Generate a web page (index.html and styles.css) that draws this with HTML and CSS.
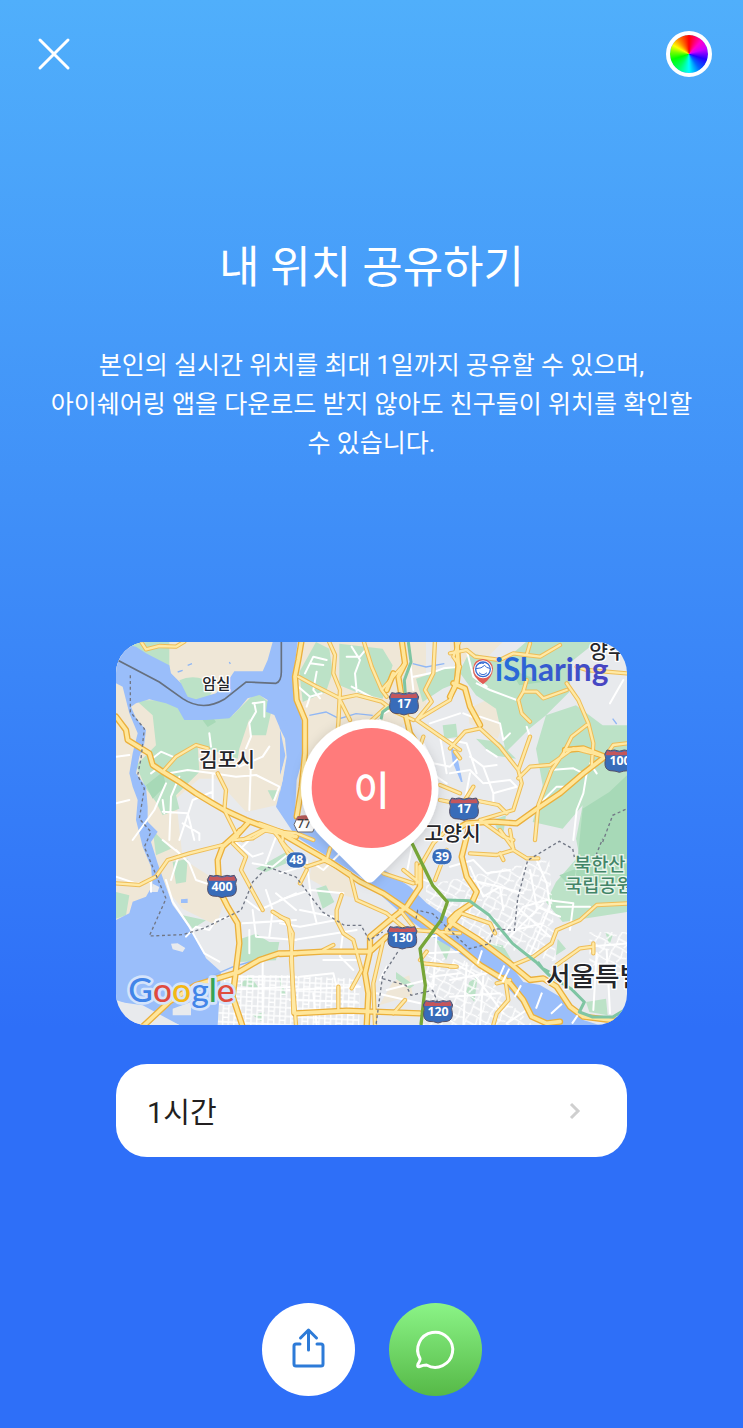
FILE: index.html
```html
<!DOCTYPE html>
<html lang="ko">
<head>
<meta charset="utf-8">
<meta name="viewport" content="width=device-width, initial-scale=1">
<title>내 위치 공유하기</title>
<link rel="stylesheet" href="styles.css">
</head>
<body>
<div class="screen">
  <header class="topbar">
    <button class="icon-button" type="button" aria-label="닫기">
      <svg class="close-icon" viewBox="0 0 46 46" aria-hidden="true"><path d="M9 9 37 37M37 9 9 37"/></svg>
    </button>
    <button class="color-wheel" type="button" aria-label="색상"></button>
  </header>
  <main class="content">
    <h1 class="title">내 위치 공유하기</h1>
    <p class="description">본인의 실시간 위치를 최대 1일까지 공유할 수 있으며,<br>아이쉐어링 앱을 다운로드 받지 않아도 친구들이 위치를 확인할 수&nbsp;있습니다.</p>
    <div class="cards">
      <svg class="map" viewBox="0 0 1533 1149" role="img" aria-label="지도">
        <defs>
          <pattern id="blocks" width="34" height="26" patternUnits="userSpaceOnUse" patternTransform="rotate(3)">
            <path d="M0 3H34M5 0V26M22 3V26M5 15H22" class="block-line"/>
          </pattern>
          <pattern id="alleys" width="58" height="48" patternUnits="userSpaceOnUse" patternTransform="rotate(28)">
            <path d="M0 8 28 4 58 8M12 0 8 24 12 48M36 5 42 30 36 48M8 30 42 30 58 24" class="block-line"/>
          </pattern>
          <linearGradient id="brand" x1="0" x2="1"><stop offset="0" stop-color="#2470dc"/><stop offset="1" stop-color="#4a43c0"/></linearGradient>
          <filter id="pin-shadow" x="-20%" y="-20%" width="140%" height="140%"><feDropShadow dx="0" dy="4" stdDeviation="16" flood-opacity=".15"/></filter>
          <g id="shield">
            <path d="M-37-32Q-26-28-15-32Q0-25 15-32Q26-28 37-32L44-19Q38-8 43 4Q45 26 28 30Q12 30 0 35Q-12 30-28 30Q-45 26-43 4Q-38-8-44-19Z" fill="#386cb9" stroke="#555069" stroke-width="3"/>
            <path d="M-36-30Q-26-25-15-29Q0-22 15-29Q26-25 36-30L41-19 39-16H-39L-41-19Z" fill="#c4565c"/>
          </g>

          <g id="minor-roads">
            <g transform="translate(0 -6)">
              <path d="M410 190 445 185 445 230M415 190 420 215 400 250 405 290 390 325M280 280 285 320M105 400 125 385 160 400 215 390 290 400 360 410 420 405 490 440 475 480M290 400 290 480M405 360 400 510M160 600 165 470 190 410M50 600 115 510 150 430M190 600 230 480 290 455M0 490 40 480M0 350 40 345M110 355 135 335 170 350M370 380 440 350 460 320M200 550 250 580 250 600M140 515 215 520 235 600M140 480 145 520"/>
            </g>
            <g transform="translate(492 -6)">
              <path d="M75 100 100 50 140 60M90 70 130 75M55 140 90 170 80 200M90 170 125 160M110 95 100 150 120 175M215 20 240 60 225 100 230 155M240 50 260 25M200 50 240 50M215 140 290 180M290 260 310 220 330 210M450 100 490 85 540 80M400 110 450 100M430 310 460 370 510 380 540 350M440 330 440 390 500 430M480 290 500 400M390 60 400 150M450 250 540 220"/>
            </g>
            <g transform="translate(1002 -6)">
              <path d="M80 130 120 150 200 180M50 30 70 110 110 140M90 230 150 250 160 300M110 330 140 350M160 300 180 280M60 350 100 380 140 375M0 400 60 390 100 430 180 420 200 440 130 460 130 490M60 400 45 480M100 380 130 460M230 260 240 290M300 390 370 385 400 400M410 400 400 460 380 510 370 600M40 220 90 240M480 190 520 120M0 300 50 310 80 400M270 490 320 440 350 440M420 370 440 400"/>
            </g>
            <g transform="translate(0 564)">
              <path d="M0 140 60 160 105 155 105 185M150 150 170 215 220 290 265 370 310 395M180 60 220 100 240 150 300 170M140 30 190 70 165 150M210 320 240 290 280 300 300 270 340 260M390 210 430 240 540 190M410 240 420 320 540 330M450 180 470 240 460 320M380 280 540 270M480 190 540 240M400 300 400 370M440 380 440 585M310 440 540 440M310 480 540 470M350 30 410 80 440 70M370 60 410 20M410 100 470 110 520 70M480 20 450 100"/>
            </g>
            <g transform="translate(492 564)">
              <path d="M0 130 100 100 130 120 190 60M60 240 160 260M80 90 95 220 110 280M0 280 60 290 170 270M40 330 230 300M60 440 160 430 170 470M0 210 90 180 190 190M190 300 180 380 220 420M130 390 240 390M20 480 240 470M30 510 230 515M100 490 110 585M400 30 380 130 460 160M440 320 540 310M430 370 540 365M450 440 540 430M300 450 320 410M320 480 440 450 460 480M470 300 460 470M290 490 420 520"/>
            </g>
            <g transform="translate(1002 564)">
              <path d="M0 110 70 90 110 130 180 120M60 110 100 200 150 170 220 190M60 150 150 170 160 240M170 300 220 230 290 210 370 220 360 300M260 90 290 160 300 230 240 370M200 230 300 320M240 120 260 230 330 260M180 320 280 220M150 310 280 280M320 230 420 230M10 400 70 430 160 550M0 450 110 430M0 500 150 490M50 400 40 585M100 440 90 585M410 350 540 340M440 370 430 540M470 360 480 550M400 430 520 430M170 580 230 540"/>
            </g>
          </g>

          <g id="roads">
            <g transform="translate(0 -6)">
              <path d="M75 5 90 28 130 18 180 20 205 5M140 395 180 350 240 315 275 325M305 400 330 450 325 510M325 510 365 590M340 605 400 545M430 550 500 575 500 600M380 600 440 570 540 590"/>
            </g>
            <g transform="translate(492 -6)">
              <path d="M145 0 165 45 160 100 180 150 175 250M55 110 110 140 180 175 230 165 305 185 345 215 400 240M250 0 275 80 305 150 375 70M305 150 320 170M180 180 210 240M175 250 170 300M265 250 320 200M465 0 460 100 435 150 455 185 410 240M540 80 510 180 410 240 540 330M430 290 420 320M480 435 540 460M480 480 530 490M540 0 520 50 540 80M0 575 50 580 100 600"/>
            </g>
            <g transform="translate(1002 -6)">
              <path d="M240 10 230 45 190 40 150 60 75 50 50 30 0 40M230 45 270 50 330 15M230 120 220 155 205 180 215 220 240 245M220 155 260 155 280 175 350 150M350 130 385 180 415 250 430 310 425 380M410 255 365 290 340 340 305 390 265 495 255 600M205 390 240 290M0 325 45 275 90 265M15 335 30 355M90 265 150 320 205 390 215 430 190 510 90 540M205 415 240 380 300 375 370 325 465 350M90 540 160 590 190 600M70 480 145 495 170 520M45 480 70 440M380 80 410 90 530 100M465 350 490 315 530 310"/>
            </g>
            <g transform="translate(0 564)">
              <path d="M370 0 355 30 410 25 450 0M350 40 390 80 375 120 440 240M470 245 510 270 530 310 525 390 540 585M470 0 510 50 530 70M0 160 70 165 120 140 155 90 220 70 320 45"/>
            </g>
            <g transform="translate(492 564)">
              <path d="M0 30 30 80 80 110 140 90 150 55M60 160 80 120M170 270 170 240 185 195M0 260 25 270 35 360 40 550M130 90 210 130 230 210 320 250 380 300M170 270 190 310 220 330 245 420 215 475M175 470 175 540M130 360 160 345M310 330 280 460 285 585M340 550 375 510M430 400 525 410M440 365 420 390M370 120 420 160M420 110 460 40 500 0M410 160 410 100M310 130 400 160M360 240 400 290M400 300 540 310M465 150 500 60"/>
            </g>
            <g transform="translate(1002 564)">
              <path d="M60 70 140 75 190 60 180 0M190 60 230 85 265 85M150 0 190 55M160 90 150 70M35 250 120 280 135 310M190 405 250 380 305 340 320 300 390 270 440 225 540 220M320 405 390 355 430 350M165 440 175 510 140 550 130 585M0 410 20 410M140 460 180 450M430 340 430 370"/>
            </g>
          </g>
          <g id="highways">
            <g transform="translate(0 -6)">
              <path d="M0 230 30 270 35 300 100 340 110 375 140 395 190 425 240 460 290 490 325 510 390 540 470 570 540 590M350 600 395 550"/>
            </g>
            <g transform="translate(492 -6)">
              <path d="M65 0 55 60 45 110 50 180 75 240 75 340 65 440 50 530M365 0 375 70 355 110 365 170 390 280 430 340M340 100 320 150"/>
            </g>
            <g transform="translate(1002 -6)">
              <path d="M20 0 25 80 20 130 0 170M0 580 50 550 130 545 200 550 270 500 330 460 400 400 465 350M10 130 45 145 60 200 90 255M345 330 400 325 465 350"/>
            </g>
            <g transform="translate(0 564)">
              <path d="M375 0 320 50 305 90 310 180 335 230 365 280 370 340 360 420 350 500 380 590M80 590 160 515 240 465 370 425 430 390 490 370 540 370"/>
            </g>
            <g transform="translate(492 564)">
              <path d="M0 8 80 55 150 95 240 155 310 190 420 265 540 355M0 372 130 365 270 365 320 320 400 300M270 365 270 320 330 270 380 230 420 170 420 110M270 365 255 430 265 490 260 590M45 550 200 542 420 550M540 250 500 300"/>
            </g>
            <g transform="translate(1002 564)">
              <path d="M55 0 35 80 50 140 80 185 65 220 20 250 0 270M0 275 80 325 180 400 240 450 280 445 320 470 360 530 400 560 520 575M30 355 90 405 180 460 220 510 245 560 290 580 330 575"/>
            </g>
          </g>
        </defs>

        <rect width="1533" height="1149" fill="#e8eaed"/>
        <g class="countryside">
          <path d="M0 0H930V190L860 250 700 490 550 480 480 490 390 510 300 410 250 410 180 470 200 650 340 740 300 850 200 800 150 740 0 900ZM1002 0H1160L1090 70 1002 50ZM1056 200 1110 175 1172 215 1145 290 1110 270 1060 245ZM590 650 700 690 720 770 650 750 580 710ZM830 1020 880 1000 890 1060 790 1090Z"/>
        </g>
        <g class="green">
          <path d="M20 0H160V100L100 50ZM190 115Q240 90 300 130L270 180 215 175ZM60 175 150 175 240 230 350 220 420 150 470 190 450 280 405 280 400 230 370 320 365 350 245 310 250 390 180 460 190 500 140 520 120 480 90 440 60 370 120 310 110 220Z"/>
          <path d="M0 750 40 760 30 820 0 830ZM10 855 60 840 75 875 50 900ZM110 565 165 620 120 640ZM170 660 215 650 210 720 180 725ZM200 820 270 835 230 860ZM375 890 420 875 460 900 490 900 480 955 370 960ZM400 1000 430 1040 370 1030ZM490 1000 510 1060 495 1060ZM455 445 490 445 470 475ZM410 1120 445 1110 440 1140Z"/>
          <path d="M600 0 640 20 650 90 630 150 560 180 550 90ZM670 5 800 20 830 70 800 170 720 150 670 130ZM900 110 1020 70 1030 120 980 140 920 180ZM980 250 1020 245 1025 285 985 290Z"/>
          <path d="M1060 30 1160 60 1230 0H1440L1365 60 1360 150 1290 220 1240 260 1170 330 1140 200 1080 160 1030 90ZM1290 220 1380 190 1460 250 1533 250V810L1340 840 1290 780 1320 720 1390 640 1380 590 1400 490 1340 560 1250 540 1280 430 1260 320ZM1080 290 1150 300 1200 350 1130 340ZM1130 535 1170 520 1160 590Z"/>
          <path d="M600 740 630 730 655 780 620 800ZM840 990 895 1030 880 1040 840 1010ZM1060 1020 1085 1005 1075 1080 1050 1050ZM1100 900 1160 910 1190 960 1140 950ZM1325 890 1350 920 1320 940ZM1468 870 1490 880 1480 910ZM1410 1080 1470 1070 1475 1120 1420 1110ZM960 895 1010 900 990 955ZM420 680 510 630 520 660 450 690Z"/>
        </g>
        <g class="deep-green">
          <path d="M1400 500 1480 450 1533 400V720L1440 720 1380 700ZM1180 80 1280 120 1210 130ZM260 235 290 225 300 240 275 255ZM90 430 140 390 150 430 110 470ZM1330 700 1380 680 1370 740Z"/>
        </g>
        <path d="M305 1000H540V1149H305ZM492 1000 730 1010 730 1149H492Z" fill="url(#blocks)"/>
        <path d="M930 730 1300 650 1320 960 1100 900 930 780ZM930 940 1080 960 1190 1090 1250 1149H920ZM1420 870H1533V980L1420 970Z" fill="url(#alleys)"/>
        <g class="water">
          <path d="M0 0 60 14 90 34 160 70 165 94 195 124 215 164 240 172 300 154 340 110 355 88 440 88 455 54 470 0H545L532 104 537 174 557 224 562 344 542 414 537 514 555 545 640 575 772 698 802 682 882 734 932 784 1010 838 1082 889 1172 954 1222 1020 1272 1029 1332 1064 1402 1134 1450 1149H1330L1262 1124 1217 1084 1172 1034 1092 977 1002 915 942 880 862 820 732 704 540 584 480 494 500 414 510 324 490 254 475 219 450 209 455 174 430 159 395 169 370 199 340 229 270 234 205 234 185 199 150 184 100 172 60 184 45 194 60 229 90 264 85 304 70 344 60 394 90 434 95 494 95 539 125 569 105 600 125 664 150 734 170 789 240 884 270 949 315 989 305 1149H190L60 1094 0 1074V834L40 814 50 779 90 764 110 729 105 674 80 614 75 594 60 534 65 474 50 434 40 394 50 334 65 274 40 214 20 134 0 124Z"/>
          <path d="M195 772 215 770 215 783 195 783ZM500 222 515 250 508 250ZM1002 300 1025 350 1040 420 1035 420 1010 360ZM492 264 510 300 508 350 492 400Z"/>
        </g>
        <path d="M492 260 507 290 512 345 500 415 492 450 485 435 508 340Z" class="island"/>
        <path d="M165 905 185 904 208 918 200 930 170 922ZM10 1080 80 1090 190 1149H40ZM170 1100 225 1080V1120H170ZM110 725 130 735 125 750 105 750Z" class="sandbar"/>
        <g class="streams"><path d="M580 220 630 210 670 230 720 215 770 220M890 65 930 75 985 65M185 90 200 85M215 70 228 65M340 60 343 66M1490 230 1502 246M270 1010 350 975 450 945 490 935M890 840 870 820"/></g>
        <use href="#minor-roads" class="minor"/>
        <use href="#roads" class="road-case"/>
        <use href="#highways" class="highway-case"/>
        <use href="#roads" class="road-fill"/>
        <use href="#highways" class="highway-fill"/>
        <path d="M1085 965 1098 925M1148 1010 1165 970M1160 1020 1180 980M1196 1065 1215 1030M1260 1100 1278 1052M1305 1115 1338 1085M1368 1145 1385 1120" class="bridge"/>
        <g class="rail-green">
          <path d="M877 0 885 60 865 115 868 155M795 232 800 210 820 195 850 188M992 774 1060 776 1120 820 1190 905 1260 960 1300 1000 1365 1040 1405 1080 1390 1110 1430 1125 1490 1125 1533 1100M1265 960 1280 980 1300 990"/>
        </g>
        <path d="M888 604 950 730 994 780 975 835 912 920 928 1030 915 1149" class="rail-olive"/>
        <path d="M0 52 130 120 200 170Q260 210 325 172L390 120 480 124Q496 118 496 90V0" class="boundary-rail"/>
        <g class="border">
          <path d="M43 100 43 210 85 260 75 350 65 400 85 440 70 530 105 570 85 615 150 770 100 882 200 878 260 860 375 805 410 720 455 675 540 705 620 810 685 850 735 850 760 895 800 870M900 830 905 805 950 815 1060 920 1120 905 1135 860 1195 865 1205 770 1235 655 1330 598 1370 620 1375 645M1440 640 1460 590M1460 600 1490 520 1533 500M845 930 800 1000 780 1149M800 1010 870 1030 885 1060 950 1045 965 1080"/>
        </g>

        <use href="#shield" x="864" y="184"/><use href="#shield" x="1044" y="500"/>
        <use href="#shield" x="1510" y="356"/><use href="#shield" x="318" y="732"/>
        <use href="#shield" x="859" y="886"/><use href="#shield" x="966" y="1108"/>
        <path d="M545 524H590L602 545 590 570H545L534 548Z" fill="#fff" stroke="#6c6970" stroke-width="3"/>
        <path d="M545 524Q565 516 590 524L596 535H540Z" fill="#b55c5a"/>
        <rect x="511" y="630" width="60" height="48" rx="22" class="route"/>
        <rect x="948" y="620" width="60" height="48" rx="22" class="route"/>
        <g class="route-text">
          <text x="864" y="198">17</text><text x="1044" y="514">17</text><text x="1512" y="370">100</text>
          <text x="318" y="746">400</text><text x="859" y="900">130</text><text x="966" y="1122">120</text>
          <text x="541" y="667">48</text><text x="978" y="657">39</text><text x="564" y="559" class="route-dark">77</text>
        </g>
        <g class="place">
          <text x="301" y="141" font-size="46">암실</text>
          <text x="333" y="376" font-size="61">김포시</text>
          <text x="1010" y="596" font-size="61">고양시</text>
          <text x="1420" y="51" font-size="61" text-anchor="start">양주시</text>
          <text x="1290" y="1033" font-size="80" text-anchor="start">서울특별시</text>
        </g>
        <g class="park"><text x="1374" y="687">북한산</text><text x="1347" y="749">국립공원</text></g>

        <path d="M615 584A206 206 0 1 1 907 584L774 716Q761 727 748 716Z" fill="#fff" filter="url(#pin-shadow)"/>
        <circle cx="767" cy="438" r="180" fill="#ff7b7b"/>
        <text x="767" y="490" class="pin-text">이</text>

        <path d="M1101 127Q1069 105 1071 79Q1074 52 1101 51Q1129 54 1131 80Q1130 105 1101 127Z" fill="#e15c55"/>
        <circle cx="1101" cy="82" r="27" fill="#fff"/>
        <circle cx="1101" cy="82" r="22" fill="#fff" stroke="#366bd3" stroke-width="4"/>
        <path d="M1081 80Q1097 80 1106 70Q1110 78 1121 79M1090 93Q1101 104 1112 93M1080 71Q1088 62 1103 64" fill="none" stroke="#366bd3" stroke-width="3" stroke-linecap="round"/>
        <text x="1137" y="118" class="brand">iSharing</text>
        <text x="37" y="1081" class="google"><tspan fill="#4285e8">G</tspan><tspan fill="#df4b3e">o</tspan><tspan fill="#f3b714">o</tspan><tspan fill="#4285e8">g</tspan><tspan fill="#36a456">l</tspan><tspan fill="#df4b3e">e</tspan></text>
      </svg>
      <button class="duration" type="button">
        <span>1시간</span>
        <svg class="chevron" viewBox="0 0 12 18" aria-hidden="true"><path d="M2 2 9 9 2 16"/></svg>
      </button>
    </div>
  </main>
  <footer class="actions">
    <button class="action share" type="button" aria-label="공유">
      <svg viewBox="0 0 93 93" aria-hidden="true"><path d="M38 41H34Q32 41 32 43V61Q32 63 34 63H59Q61 63 61 61V43Q61 41 59 41H55M46.500 47V27M38.500 35 46.500 27 54.500 35"/></svg>
    </button>
    <button class="action message" type="button" aria-label="메시지">
      <svg viewBox="0 0 93 93" aria-hidden="true"><path d="M31 55.500A17.500 17.500 0 1 1 37.500 62Q34.500 62 30.500 63.500Q28 64.500 29 61Q31.500 57 31 55.500Z"/></svg>
    </button>
  </footer>
</div>
</body>
</html>
```
FILE: styles.css
```css
* { box-sizing: border-box; }
body {
  margin: 0;
  font-family: Roboto, "Noto Sans CJK KR", sans-serif;
  color: #fff;
}
button {
  padding: 0;
  border: 0;
  font: inherit;
  cursor: pointer;
}
.screen {
  display: flex;
  flex-direction: column;
  min-height: 100vh;
  padding: 31px 0 32px;
  background: linear-gradient(#50affb 0%, #4090f8 35%, #2e6ff8 72%, #2e6ff8 100%);
}
.topbar {
  display: flex;
  justify-content: space-between;
  padding: 0 31px;
}
.icon-button { background: none; }
.icon-button, .close-icon {
  display: block;
  width: 46px;
  height: 46px;
}
.close-icon {
  fill: none;
  stroke: #fff;
  stroke-width: 3;
  stroke-linecap: round;
}
.color-wheel {
  width: 46px;
  height: 46px;
  border: 4px solid #fff;
  border-radius: 50%;
  background: conic-gradient(#f00, #f0c 12%, #c0f 20%, #20f 30%, #06f 40%, #0ff 50%, #0f6 60%, #0f0 70%, #7f0 77%, #ff0 83%, #f80 90%, #f00) border-box;
  background-clip: padding-box;
}
.title {
  margin: 161px 32px 48px;
  font-size: 44px;
  line-height: 60px;
  font-weight: 400;
  text-align: center;
}
.description {
  margin: 0 40px 179px;
  font-size: 25px;
  line-height: 39px;
  text-align: center;
  word-break: keep-all;
}
.cards {
  display: grid;
  gap: 39px;
  padding: 0 116px;
}
.map {
  display: block;
  width: 100%;
  height: auto;
  border-radius: 31px;
}
.duration {
  display: flex;
  align-items: center;
  justify-content: space-between;
  min-height: 93px;
  padding: 0 46px 0 31px;
  border-radius: 31px;
  background: #fff;
  color: #231f20;
  font-size: 29px;
  line-height: 40px;
}
.duration span { padding-top: 4px; }
.chevron {
  width: 12px;
  height: 18px;
  fill: none;
  stroke: #cfcfcf;
  stroke-width: 3;
}
.actions {
  display: flex;
  justify-content: center;
  gap: 34px;
  margin-top: auto;
  padding-top: 48px;
}
.action {
  width: 93px;
  height: 93px;
  border-radius: 50%;
}
.action svg {
  display: block;
  width: 100%;
  fill: none;
  stroke-width: 3;
  stroke-linecap: round;
  stroke-linejoin: round;
}
.share { background: #fff; }
.share svg { stroke: #2d7bd8; }
.message { background: linear-gradient(#8bf487, #56b947); }
.message svg { stroke: #fff; }

.block-line { fill: none; stroke: #fff; stroke-width: 4; }
.countryside { fill: #efe7d7; }
.green { fill: #bce2c7; }
.deep-green { fill: #a7d9b7; }
.water { fill: #9abefa; }
.island { fill: #efe7d7; }
.sandbar { fill: #e8eaed; }
.streams { fill: none; stroke: #90b7f5; stroke-width: 4; }
.minor, .road-case, .road-fill, .highway-case, .highway-fill {
  fill: none;
  stroke-linejoin: round;
  stroke-linecap: round;
}
.minor { stroke: #fff; stroke-width: 6; }
.road-case { stroke: #eebd58; stroke-width: 13; }
.road-fill { stroke: #ffe9a5; stroke-width: 7; }
.highway-case { stroke: #ebb03c; stroke-width: 19; }
.highway-fill { stroke: #ffe69a; stroke-width: 11; }
.bridge { stroke: #fff; stroke-width: 6; }
.rail-green { fill: none; stroke: #7fc5a3; stroke-width: 9; stroke-linejoin: round; }
.rail-olive { fill: none; stroke: #77a638; stroke-width: 10; stroke-linejoin: round; }
.boundary-rail { fill: none; stroke: #66707f; stroke-width: 5; }
.border { fill: none; stroke: #717785; stroke-width: 4; stroke-dasharray: 9 8; }
.route { fill: #386cb9; stroke: #fff; stroke-width: 2; }
.route-text {
  fill: #fff;
  font-family: "Noto Sans", sans-serif;
  font-size: 37px;
  font-weight: 700;
  text-anchor: middle;
}
.route-dark { fill: #3c3c40; font-weight: 500; }
.place {
  fill: #24252a;
  stroke: #fff;
  stroke-width: 8;
  stroke-linejoin: round;
  paint-order: stroke;
  font-weight: 500;
  text-anchor: middle;
}
.park {
  fill: #438568;
  stroke: #e8f5eb;
  stroke-width: 8;
  paint-order: stroke;
  font-size: 56px;
  font-weight: 500;
}
.pin-text { fill: #fff; font-size: 118px; font-weight: 500; text-anchor: middle; }
.brand {
  fill: url(#brand);
  font-family: Lato, sans-serif;
  font-size: 95px;
  font-weight: 700;
}
.google {
  stroke: #d5e4fb;
  stroke-width: 16;
  stroke-linejoin: round;
  paint-order: stroke;
  font-family: Lato, sans-serif;
  font-size: 101px;
  font-weight: 500;
}
```
